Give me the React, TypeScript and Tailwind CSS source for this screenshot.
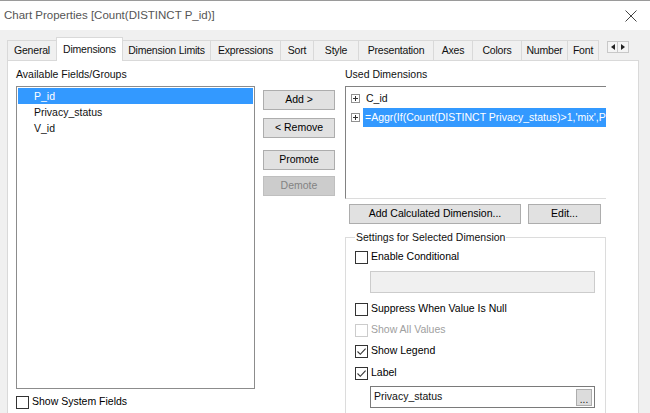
import React from 'react';

const tabs = [
  { name: 'General', w: 'w-[50px]' },
  { name: 'Dimensions', w: 'w-[67px]', active: true },
  { name: 'Dimension Limits', w: 'w-[88px]' },
  { name: 'Expressions', w: 'w-[70px]' },
  { name: 'Sort', w: 'w-[33px]' },
  { name: 'Style', w: 'w-[45px]' },
  { name: 'Presentation', w: 'w-[75px]' },
  { name: 'Axes', w: 'w-[39px]' },
  { name: 'Colors', w: 'w-[49px]' },
  { name: 'Number', w: 'w-[46px]' },
  { name: 'Font', w: 'w-[31px]' },
];

const fields = ['P_id', 'Privacy_status', 'V_id'];

function Check({ checked, disabled }: { checked?: boolean; disabled?: boolean }) {
  return (
    <span
      className={`w-[13px] h-[13px] border bg-white flex items-center justify-center shrink-0 ${
        disabled ? 'border-[#cccccc]' : 'border-[#333333]'
      }`}
    >
      {checked && (
        <svg width="11" height="11" viewBox="0 0 11 11">
          <path d="M1.5 5.5 L4.3 8.3 L9.6 2.6" stroke="#333" strokeWidth="1.1" fill="none" />
        </svg>
      )}
    </span>
  );
}

function CheckRow({ label, checked, disabled, className = '' }: { label: string; checked?: boolean; disabled?: boolean; className?: string }) {
  return (
    <div className={`flex items-center h-[16px] gap-[3px] ${className}`}>
      <Check checked={checked} disabled={disabled} />
      <span className={disabled ? 'text-[#a0a0a0]' : 'text-black'}>{label}</span>
    </div>
  );
}

function Btn({ children, disabled, className = '' }: { children: React.ReactNode; disabled?: boolean; className?: string }) {
  return (
    <div
      className={`h-[20px] flex items-center justify-center border ${
        disabled ? 'bg-[#cccccc] border-[#bfbfbf] text-[#838383]' : 'bg-[#e1e1e1] border-[#adadad] text-black'
      } ${className}`}
    >
      {children}
    </div>
  );
}

function PlusBox() {
  return (
    <svg width="9" height="9" viewBox="0 0 9 9" className="shrink-0">
      <rect x="0.5" y="0.5" width="8" height="8" fill="#fff" stroke="#919191" />
      <path d="M2 4.5 H7 M4.5 2 V7" stroke="#333" strokeWidth="1" />
    </svg>
  );
}

export default function App() {
  return (
    <div className="w-[650px] h-[413px] overflow-hidden bg-[#f0f0f0] border-t border-[#9a9a9a] flex flex-col font-['Liberation_Sans',Arial,sans-serif] text-[10.5px] text-[#111111]">
      {/* title bar */}
      <div className="h-[29px] bg-white flex items-center justify-between shrink-0">
        <span className="pl-[4px] text-[11.5px] text-[#555555]">Chart Properties [Count(DISTINCT P_id)]</span>
        <svg width="12" height="12" viewBox="0 0 12 12" className="mr-[13px]">
          <path d="M0.5 0.5 L11.5 11.5 M11.5 0.5 L0.5 11.5" stroke="#444" strokeWidth="1" />
        </svg>
      </div>

      {/* tab strip */}
      <div className="h-[30px] flex items-end pl-[7px] shrink-0 tracking-[-0.2px]">
        {tabs.map((t, i) =>
          t.active ? (
            <div
              key={t.name}
              className={`${t.w} h-[24px] -mb-px relative z-10 bg-white border-l border-t border-r border-[#d9d9d9] -ml-px flex items-start justify-center pt-[4px] whitespace-nowrap`}
            >
              {t.name}
            </div>
          ) : (
            <div
              key={t.name}
              className={`${t.w} h-[20px] border-t border-r border-[#d9d9d9] ${i === 0 ? 'border-l' : ''} flex items-center justify-center whitespace-nowrap`}
            >
              {t.name}
            </div>
          )
        )}
        <div className="self-start mt-[11px] ml-[8px] flex">
          <div className="w-[11px] h-[12px] border border-[#c8c8c8] bg-[#f4f4f4] flex items-center justify-center">
            <svg width="4" height="6" viewBox="0 0 4 6"><path d="M4 0 L0 3 L4 6 Z" fill="#222" /></svg>
          </div>
          <div className="w-[11px] h-[12px] border border-l-0 border-[#c8c8c8] bg-[#f4f4f4] flex items-center justify-center">
            <svg width="4" height="6" viewBox="0 0 4 6"><path d="M0 0 L4 3 L0 6 Z" fill="#222" /></svg>
          </div>
        </div>
      </div>

      {/* panel */}
      <div className="ml-[7px] w-[632px] flex-1 bg-white border border-[#d9d9d9] flex">
        {/* left column */}
        <div className="ml-[8px] w-[239px] pt-[5px] flex flex-col">
          <div className="h-[16px] leading-[16px]">Available Fields/Groups</div>
          <div className="mt-[4px] h-[303px] border border-[#8c8c8c] p-px">
            {fields.map((f, i) => (
              <div
                key={f}
                className={`h-[16px] leading-[16px] pl-[16px] ${i === 0 ? 'bg-[#3399ff] text-white' : ''}`}
              >
                {f}
              </div>
            ))}
          </div>
          <CheckRow label="Show System Fields" className="mt-[5px]" />
        </div>

        {/* middle buttons */}
        <div className="ml-[8px] w-[72px] pt-[29px] flex flex-col">
          <Btn>Add &gt;</Btn>
          <Btn className="mt-[8px]">&lt; Remove</Btn>
          <Btn className="mt-[12px]">Promote</Btn>
          <Btn className="mt-[6px]" disabled>Demote</Btn>
        </div>

        {/* right column */}
        <div className="ml-[10px] w-[261px] pt-[5px] flex flex-col">
          <div className="h-[16px] leading-[16px]">Used Dimensions</div>
          <div className="mt-[4px] h-[113px] border-t border-l border-[#828282] border-b border-b-[#dcdcdc] overflow-hidden pt-[2px]">
            <div className="h-[19px] flex items-center pl-[5px] gap-[6px]">
              <PlusBox />
              <span>C_id</span>
            </div>
            <div className="h-[19px] flex items-center pl-[5px]">
              <PlusBox />
              <span className="ml-[3px] h-full flex-1 bg-[#3399ff] text-white flex items-center pl-[2px] whitespace-nowrap overflow-hidden">
                =Aggr(If(Count(DISTINCT Privacy_status)&gt;1,'mix',P
              </span>
            </div>
          </div>
          <div className="mt-[5px] flex pl-[4px]">
            <Btn className="w-[172px]">Add Calculated Dimension...</Btn>
            <Btn className="ml-[7px] w-[73px]">Edit...</Btn>
          </div>

          <fieldset className="mt-[5px] border border-[#dcdcdc] px-[9px] pb-[20px]">
            <legend className="px-[1px] leading-[16px]">Settings for Selected Dimension</legend>
            <CheckRow label="Enable Conditional" className="mt-[4px]" />
            <div className="mt-[6px] ml-[15px] w-[225px] h-[22px] bg-[#f0f0f0] border border-[#cccccc]" />
            <CheckRow label="Suppress When Value Is Null" className="mt-[8px]" />
            <CheckRow label="Show All Values" disabled className="mt-[5px]" />
            <CheckRow label="Show Legend" checked className="mt-[5px]" />
            <CheckRow label="Label" checked className="mt-[6px]" />
            <div className="mt-[5px] ml-[15px] w-[225px] h-[22px] border border-[#7a7a7a] flex items-center justify-between pl-[3px] pr-[2px]">
              <span>Privacy_status</span>
              <div className="w-[16px] h-[17px] bg-[#dcdcdc] border border-[#adadad] flex items-end justify-center leading-[10px] text-[10px]">...</div>
            </div>
          </fieldset>
        </div>
      </div>
    </div>
  );
}
